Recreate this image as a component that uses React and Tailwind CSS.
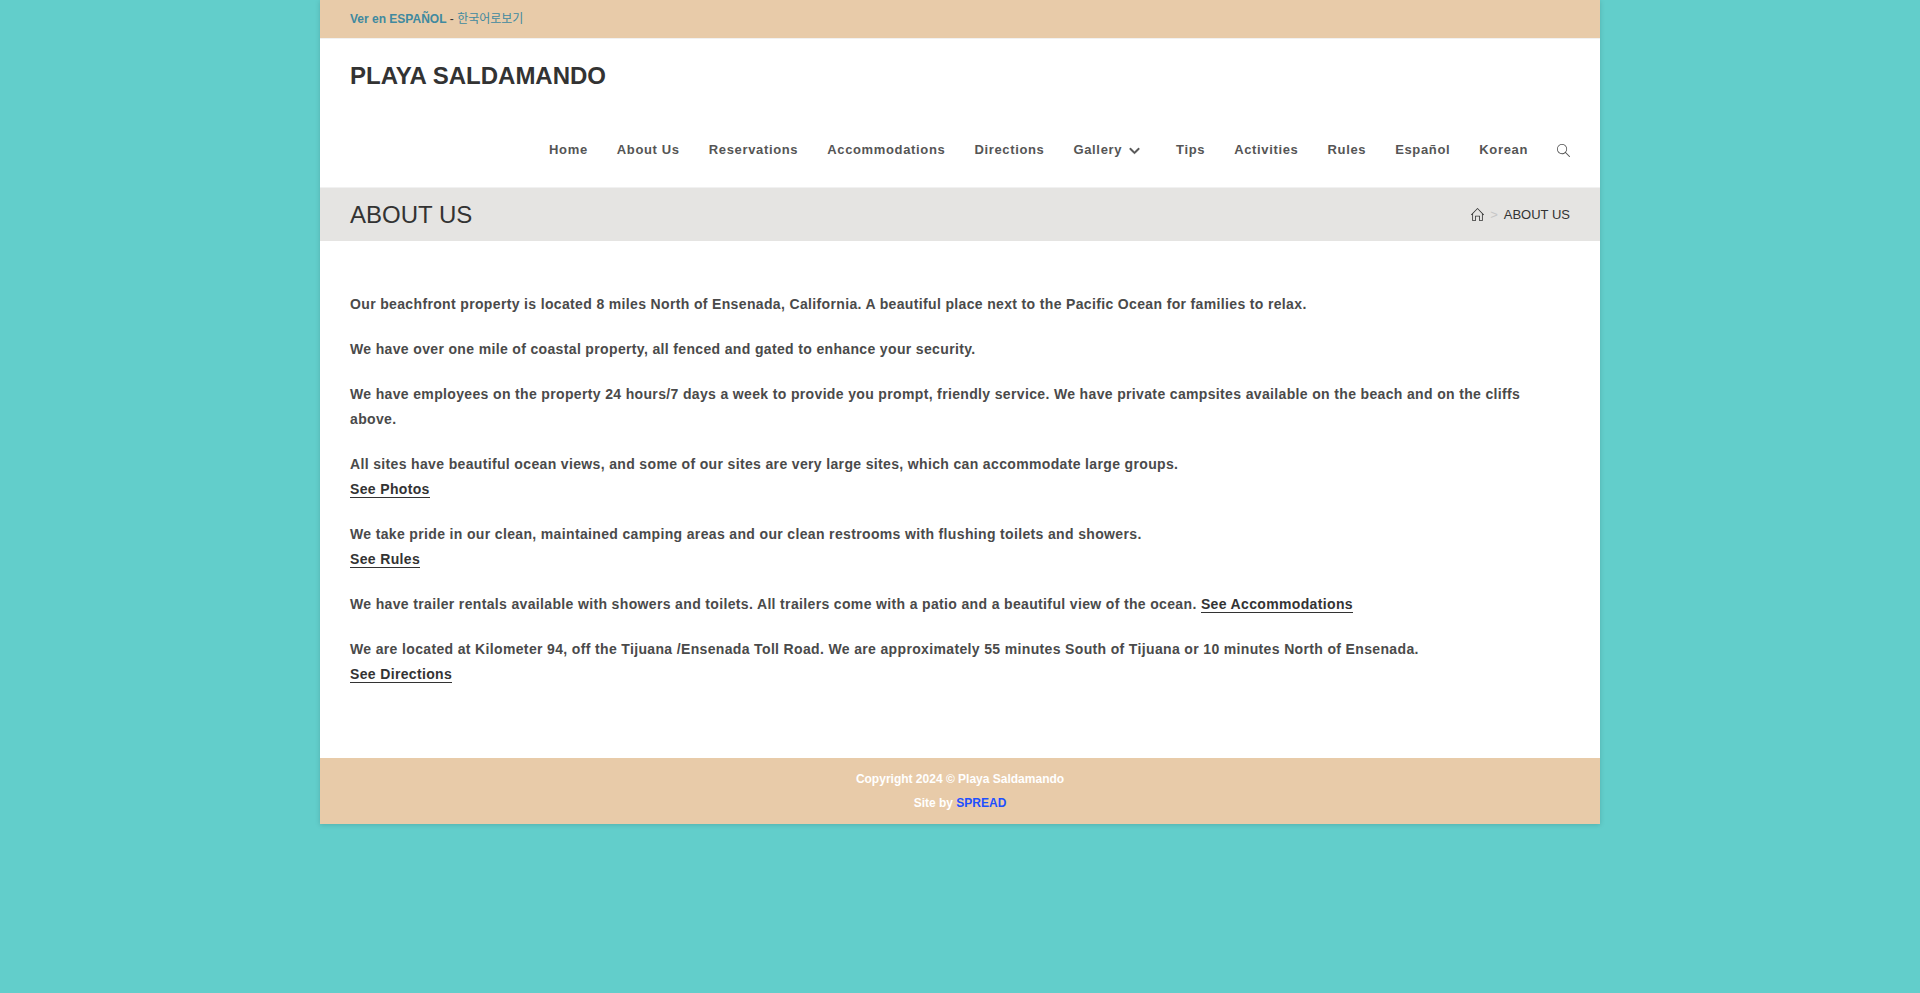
import { SlMagnifier, SlHome } from "react-icons/sl";
import { FaAngleDown } from "react-icons/fa6";

const navItems = [
  "Home",
  "About Us",
  "Reservations",
  "Accommodations",
  "Directions",
  "Gallery",
  "Tips",
  "Activities",
  "Rules",
  "Español",
  "Korean",
];

const paragraphs = [
  { text: "Our beachfront property is located 8 miles North of Ensenada, California. A beautiful place next to the Pacific Ocean for families to relax." },
  { text: "We have over one mile of coastal property, all fenced and gated to enhance your security." },
  { text: "We have employees on the property 24 hours/7 days a week to provide you prompt, friendly service. We have private campsites available on the beach and on the cliffs above." },
  { text: "All sites have beautiful ocean views, and some of our sites are very large sites, which can accommodate large groups.", link: "See Photos", newLine: true },
  { text: "We take pride in our clean, maintained camping areas and our clean restrooms with flushing toilets and showers.", link: "See Rules", newLine: true },
  { text: "We have trailer rentals available with showers and toilets. All trailers come with a patio and a beautiful view of the ocean.", link: "See Accommodations" },
  { text: "We are located at Kilometer 94, off the Tijuana /Ensenada Toll Road. We are approximately 55 minutes South of Tijuana or 10 minutes North of Ensenada.", link: "See Directions", newLine: true },
];

function TopBar() {
  return (
    <div className="border-b border-[#f1f1f1] bg-[#e8cba9] px-[30px] py-2 text-xs leading-[22px] text-[#333333]">
      <a href="#es" className="font-bold text-[#40899f]">Ver en ESPAÑOL</a>
      {" - "}
      <a href="#ko" className="text-[#40899f]">한국어로보기</a>
    </div>
  );
}

function Header() {
  return (
    <header className="border-b border-[#f1f1f1] px-[30px]">
      <div className="flex h-[74px] items-center">
        <a href="#home" className="text-2xl font-bold text-[#333333]">PLAYA SALDAMANDO</a>
      </div>
      <nav aria-label="Main" className="flex h-[74px] items-center justify-end gap-[29px] text-[13px] font-bold tracking-wider text-[#555555]">
        {navItems.map((item) => (
          <a key={item} href="#nav" className="flex items-center">
            {item}
            {item === "Gallery" && <FaAngleDown strokeWidth={16} className="mx-[6px] size-[13px]" />}
          </a>
        ))}
        <button type="button" aria-label="Search">
          <SlMagnifier className="size-[13px]" />
        </button>
      </nav>
    </header>
  );
}

function PageTitle() {
  return (
    <div className="flex items-center justify-between bg-[#e5e4e2] px-[30px] py-[10px] text-[#333333]">
      <h1 className="text-2xl leading-[33px]">ABOUT US</h1>
      <nav aria-label="Breadcrumbs" className="flex items-center text-[13px]">
        <a href="#home" aria-label="Home">
          <SlHome className="size-[13px]" />
        </a>
        <span className="mx-[6px] text-[13px] text-[#c7c7c7]">&gt;</span>
        <a href="#about">ABOUT US</a>
      </nav>
    </div>
  );
}

export default function App() {
  return (
    <div className="min-h-screen bg-[#62cecb] font-['Liberation_Sans','Noto_Sans_CJK_KR',sans-serif]">
      <div className="mx-auto max-w-[1280px] bg-white shadow-[0_1px_5px_rgba(0,0,0,0.15)]">
        <TopBar />
        <Header />
        <PageTitle />
        <main className="flex flex-col gap-5 px-[30px] pt-[51px] pb-[71px] text-sm leading-[25px] font-bold tracking-wide text-[#4a4a4a]">
          {paragraphs.map(({ text, link, newLine }) => (
            <p key={text}>
              {text}
              {link && (newLine ? <br /> : " ")}
              {link && (
                <a href="#more" className="border-b border-[#333333] text-[#333333]">{link}</a>
              )}
            </p>
          ))}
        </main>
        <footer className="bg-[#e8cba9] py-[9px] text-center text-xs leading-6 font-bold text-white">
          <p>Copyright 2024 © Playa Saldamando</p>
          <p>
            Site by <a href="#spread" className="text-[#1e50ff]">SPREAD</a>
          </p>
        </footer>
      </div>
    </div>
  );
}
